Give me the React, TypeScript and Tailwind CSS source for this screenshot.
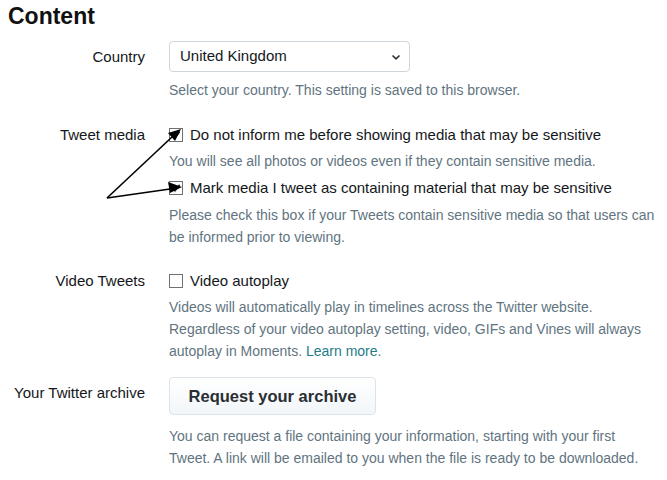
import type { ReactNode } from "react";

function Checkbox({ checked }: { checked?: boolean }) {
  return (
    <span className="w-[14px] h-[14px] border border-[#707070] bg-white flex items-center justify-center shrink-0">
      {checked && (
        <svg width="10" height="10" viewBox="0 0 10 10" fill="none">
          <path d="M1.5 5.2 L4 7.8 L8.6 1.8" stroke="#222" strokeWidth="1.6" />
        </svg>
      )}
    </span>
  );
}

function Row({
  label,
  labelClass = "",
  children,
  className = "",
}: {
  label: string;
  labelClass?: string;
  children: ReactNode;
  className?: string;
}) {
  return (
    <div className={`flex ${className}`}>
      <div
        className={`w-[145px] shrink-0 text-right text-[15px] text-[#14171a] whitespace-nowrap ${labelClass}`}
      >
        {label}
      </div>
      <div className="ml-6 flex-1">{children}</div>
    </div>
  );
}

function Help({ children }: { children: ReactNode }) {
  return (
    <p className="text-[14px] leading-[22px] text-[#5f7480] whitespace-nowrap">
      {children}
    </p>
  );
}

export default function App() {
  return (
    <div
      className="relative w-[667px] h-[480px] bg-white overflow-hidden"
      style={{ fontFamily: '"Liberation Sans", Arial, sans-serif' }}
    >
      <h2 className="pl-2 pt-[2px] text-[23px] leading-[28px] font-bold text-[#111]">
        Content
      </h2>

      {/* Country */}
      <Row label="Country" labelClass="leading-[31px]" className="mt-[11px]">
        <div className="w-[241px] h-[31px] border border-[#cfd6db] rounded-[4px] flex items-center justify-between pl-[10px] pr-[8px] text-[15px] text-[#14171a]">
          <span>United Kingdom</span>
          <svg width="10" height="8" viewBox="0 0 10 8" fill="none">
            <path d="M1.5 2.5 L5 5.8 L8.5 2.5" stroke="#333" strokeWidth="1.7" />
          </svg>
        </div>
        <div className="mt-[7px]">
          <Help>Select your country. This setting is saved to this browser.</Help>
        </div>
      </Row>

      {/* Tweet media */}
      <Row label="Tweet media" labelClass="leading-[22px]" className="mt-[23px]">
        <div className="flex items-center gap-[7px] h-[22px] text-[15px] text-[#14171a]">
          <Checkbox checked />
          <span>Do not inform me before showing media that may be sensitive</span>
        </div>
        <div className="mt-[4px]">
          <Help>You will see all photos or videos even if they contain sensitive media.</Help>
        </div>
        <div className="mt-[5px] flex items-center gap-[7px] h-[22px] text-[15px] text-[#14171a]">
          <Checkbox checked />
          <span>Mark media I tweet as containing material that may be sensitive</span>
        </div>
        <div className="mt-[5px]">
          <Help>
            Please check this box if your Tweets contain sensitive media so that users can
            <br />
            be informed prior to viewing.
          </Help>
        </div>
      </Row>

      {/* Video Tweets */}
      <Row label="Video Tweets" labelClass="leading-[22px]" className="mt-[22px]">
        <div className="flex items-center gap-[7px] h-[22px] text-[15px] text-[#14171a]">
          <Checkbox />
          <span>Video autoplay</span>
        </div>
        <div className="mt-[4px]">
          <Help>
            Videos will automatically play in timelines across the Twitter website.
            <br />
            Regardless of your video autoplay setting, video, GIFs and Vines will always
            <br />
            autoplay in Moments. <span className="text-[#1f7c86]">Learn more</span>.
          </Help>
        </div>
      </Row>

      {/* Archive */}
      <Row label="Your Twitter archive" labelClass="leading-[22px] mt-[5px]" className="mt-[15px]">
        <button className="w-[207px] h-[38px] rounded-[4px] border border-[#dde4e9] bg-gradient-to-b from-white to-[#f2f6f9] text-[16.5px] font-bold text-[#292f33]">
          Request your archive
        </button>
        <div className="mt-[10px]">
          <Help>
            You can request a file containing your information, starting with your first
            <br />
            Tweet. A link will be emailed to you when the file is ready to be downloaded.
          </Help>
        </div>
      </Row>

      {/* Annotation arrows */}
      <svg
        className="absolute left-0 top-0 pointer-events-none"
        width="667"
        height="480"
        viewBox="0 0 667 480"
      >
        <line x1="107" y1="198" x2="172" y2="137" stroke="#000" strokeWidth="1.6" />
        <polygon points="181,129 168,133 175,141" fill="#000" />
        <line x1="107" y1="198" x2="170" y2="189" stroke="#000" strokeWidth="1.6" />
        <polygon points="182,187 168,182 170,193" fill="#000" />
      </svg>
    </div>
  );
}
